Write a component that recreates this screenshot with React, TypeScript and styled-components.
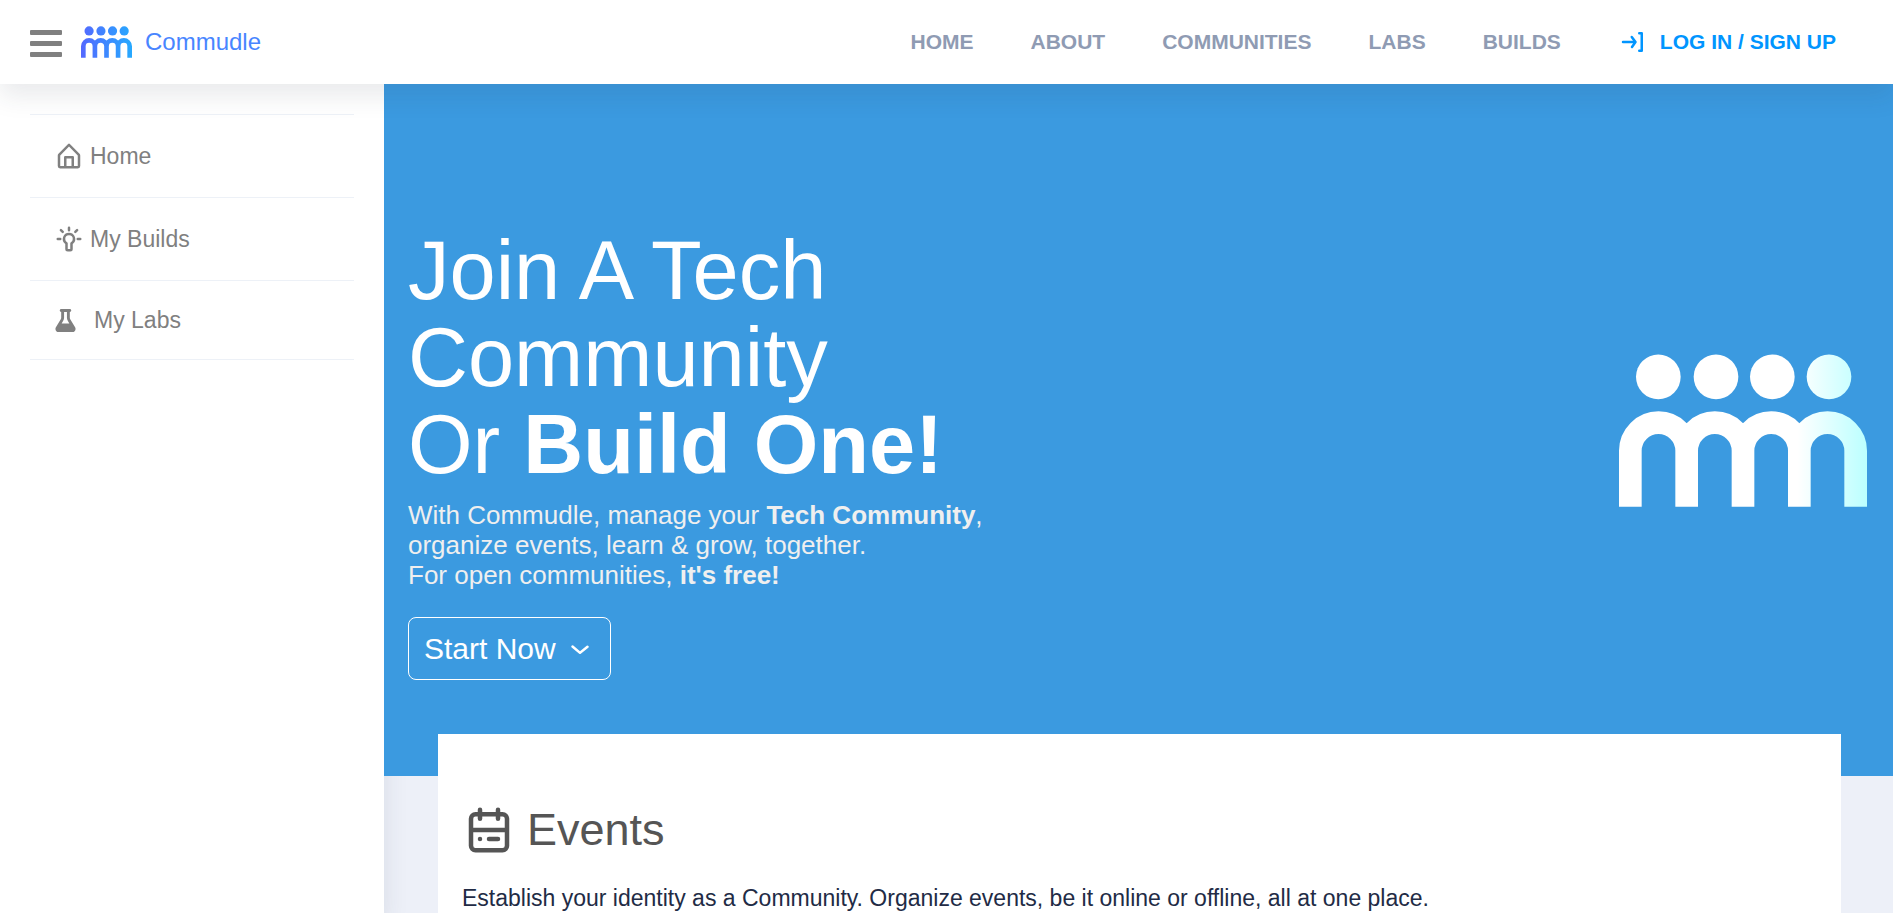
import React from "react";
import styled, { createGlobalStyle } from "styled-components";
import { FaFlask } from "react-icons/fa6";

const GlobalStyle = createGlobalStyle`
  *, *::before, *::after { box-sizing: border-box; }
  body {
    margin: 0;
    background: #edf0f8;
    color: #222b45;
    font-family: "Liberation Sans", Arial, Helvetica, sans-serif;
    font-size: 23px;
    line-height: 30px;
  }
`;

const Page = styled.div`
  display: flex;
  flex-direction: column;
  height: 100vh;
`;

const Header = styled.header`
  position: relative;
  z-index: 3;
  display: flex;
  align-items: center;
  justify-content: space-between;
  flex: none;
  height: 84px;
  padding: 0 57px 0 30px;
  background: #fff;
  box-shadow: 0 12px 24px 0 rgba(44, 51, 73, 0.1);
`;

const Brand = styled.div`
  display: flex;
  align-items: center;
`;

const MenuButton = styled.button`
  display: flex;
  flex-direction: column;
  gap: 6px;
  width: 32px;
  margin: 3px 19px 0 0;
  padding: 0;
  border: 0;
  background: none;
  cursor: pointer;
`;

const MenuBar = styled.span`
  height: 5px;
  border-radius: 1px;
  background: #808080;
`;

const BrandLink = styled.a`
  display: flex;
  align-items: center;
  gap: 13px;
  color: #4885ff;
  font-size: 24px;
  text-decoration: none;
`;

const Nav = styled.nav`
  display: flex;
  align-items: center;
  gap: 57px;
`;

const NavLink = styled.a<{ $accent?: boolean }>`
  display: flex;
  align-items: center;
  gap: 12px;
  color: ${(p) => (p.$accent ? "#0095ff" : "#8f9bb3")};
  font-size: 21px;
  font-weight: 700;
  text-decoration: none;
  text-transform: uppercase;
`;

const Body = styled.div`
  display: flex;
  flex: 1;
  min-height: 0;
`;

const Sidebar = styled.aside`
  flex: none;
  width: 384px;
  padding: 30px;
  background: #fff;
  box-shadow: 0 12px 24px 0 rgba(44, 51, 73, 0.1);
`;

const SideList = styled.ul`
  margin: 0;
  padding: 0;
  border-top: 1px solid #edf1f7;
  list-style: none;
`;

const SideItem = styled.li`
  border-bottom: 1px solid #edf1f7;
`;

const SideLink = styled.a<{ $compact?: boolean }>`
  display: flex;
  align-items: center;
  gap: ${(p) => (p.$compact ? 17 : 6)}px;
  height: ${(p) => (p.$compact ? 78 : 82)}px;
  padding: 0 24px;
  color: #808080;
  text-decoration: none;
`;

const Main = styled.main`
  position: relative;
  flex: 1;
  min-width: 0;
  overflow-y: auto;
  scrollbar-width: none;
`;

const Hero = styled.section`
  position: relative;
  display: flex;
  align-items: center;
  justify-content: space-between;
  padding: 0 26px 0 24px;
  background: #3b9ae0;
`;

const HeroCopy = styled.div`
  padding: 143px 0 96px;
`;

const HeroTitle = styled.h1`
  margin: 0 0 12px;
  color: #fff;
  font-size: 83px;
  font-weight: 400;
  line-height: 87px;
`;

const HeroText = styled.p`
  margin: 0 0 27px;
  color: #efefef;
  font-size: 26px;
`;

const StartButton = styled.button`
  display: flex;
  align-items: center;
  gap: 9px;
  height: 63px;
  padding: 0 15px;
  border: 1px solid #fff;
  border-radius: 8px;
  background: none;
  color: #fff;
  font-family: inherit;
  font-size: 30px;
  cursor: pointer;
`;

const EventsCard = styled.section`
  position: relative;
  margin: -42px 52px 0 54px;
  padding: 69px 24px 48px;
  background: #fff;
`;

const CardHeading = styled.h2`
  display: flex;
  align-items: center;
  gap: 11px;
  margin: 0 0 26px;
  color: #555;
  font-size: 45px;
  font-weight: 400;
  line-height: 54px;
`;

const CardText = styled.p`
  margin: 0;
`;

const EVA = {
  home: "M20.42 10.18L12.71 2.3a1 1 0 0 0-1.42 0l-7.71 7.89A2 2 0 0 0 3 11.62V20a2 2 0 0 0 1.89 2h14.22A2 2 0 0 0 21 20v-8.38a2.07 2.07 0 0 0-.58-1.44zM10 20v-6h4v6zm9 0h-3v-7a1 1 0 0 0-1-1H9a1 1 0 0 0-1 1v7H5v-8.42l7-7.15 7 7.19z",
  bulb: "M12 7a5 5 0 0 0-3 9v4a2 2 0 0 0 2 2h2a2 2 0 0 0 2-2v-4a5 5 0 0 0-3-9zm1.5 7.59a1 1 0 0 0-.5.87V20h-2v-4.54a1 1 0 0 0-.5-.87A3 3 0 0 1 9 12a3 3 0 0 1 6 0 3 3 0 0 1-1.5 2.59zM12 6a1 1 0 0 0 1-1V3a1 1 0 0 0-2 0v2a1 1 0 0 0 1 1zm9 5h-2a1 1 0 0 0 0 2h2a1 1 0 0 0 0-2zM5 11H3a1 1 0 0 0 0 2h2a1 1 0 0 0 0-2zm2.66-5.42L6.22 4.19a1 1 0 0 0-1.39 1.44l1.44 1.39a1 1 0 0 0 .73.28 1 1 0 0 0 .69-.31 1 1 0 0 0-.03-1.41zm10.12-1.39l-1.44 1.39a1 1 0 0 0 0 1.42 1 1 0 0 0 .72.3 1 1 0 0 0 .69-.28l1.44-1.39a1 1 0 0 0-1.41-1.44z",
  login: "M19 4h-2a1 1 0 0 0 0 2h1v12h-1a1 1 0 0 0 0 2h2a1 1 0 0 0 1-1V5a1 1 0 0 0-1-1zM11.8 7.4a1 1 0 0 0-1.6 1.2L12 11H4a1 1 0 0 0 0 2h8.09l-1.72 2.44a1 1 0 0 0 .24 1.4 1 1 0 0 0 .58.18 1 1 0 0 0 .81-.42l2.82-4a1 1 0 0 0 0-1.18z",
  calendar:
    "M18 4h-1V3a1 1 0 0 0-2 0v1H9V3a1 1 0 0 0-2 0v1H6a3 3 0 0 0-3 3v12a3 3 0 0 0 3 3h12a3 3 0 0 0 3-3V7a3 3 0 0 0-3-3zM6 6h1v1a1 1 0 0 0 2 0V6h6v1a1 1 0 0 0 2 0V6h1a1 1 0 0 1 1 1v4H5V7a1 1 0 0 1 1-1zm12 14H6a1 1 0 0 1-1-1v-6h14v6a1 1 0 0 1-1 1zM8 15a1 1 0 1 0 0 2a1 1 0 0 0 0-2zM16 15h-4a1 1 0 0 0 0 2h4a1 1 0 0 0 0-2z",
  chevron:
    "M12 16a1 1 0 0 1-.64-.23l-6-5a1 1 0 1 1 1.28-1.54L12 13.71l5.36-4.32a1 1 0 0 1 1.41.15 1 1 0 0 1-.14 1.46l-6 4.83A1 1 0 0 1 12 16z",
};

function EvaIcon({ name, size = 30 }: { name: keyof typeof EVA; size?: number }) {
  return (
    <svg width={size} height={size} viewBox="0 0 24 24" fill="currentColor" aria-hidden="true">
      <path d={EVA[name]} />
    </svg>
  );
}

/* Four heads over four linked arches, filled with one horizontal gradient. */
function Logo({ id, width, height, stops }: {
  id: string;
  width: number;
  height: number;
  stops: [string, string][];
}) {
  const paint = `url(#${id})`;
  return (
    <svg width={width} height={height} viewBox="0 0 744 458" aria-hidden="true">
      <defs>
        <linearGradient id={id} gradientUnits="userSpaceOnUse" x1="0" y1="0" x2="744" y2="0">
          {stops.map(([offset, color]) => (
            <stop key={offset} offset={offset} stopColor={color} />
          ))}
        </linearGradient>
      </defs>
      <g fill={paint}>
        {[118, 291, 460, 630].map((cx) => (
          <circle key={cx} cx={cx} cy="68" r="67" />
        ))}
      </g>
      <path
        fill="none"
        stroke={paint}
        strokeWidth="68"
        d="M34 458V290a84.5 84.5 0 0 1 169 0V458M203 290a84.5 84.5 0 0 1 169 0V458M372 290a84.5 84.5 0 0 1 169 0V458M541 290a84.5 84.5 0 0 1 169 0V458"
      />
    </svg>
  );
}

export default function App() {
  return (
    <Page>
      <GlobalStyle />
      <Header>
        <Brand>
          <MenuButton aria-label="Toggle menu">
            <MenuBar />
            <MenuBar />
            <MenuBar />
          </MenuButton>
          <BrandLink href="#">
            <Logo id="brand" width={51} height={32} stops={[["0", "#5468ff"], ["1", "#26a9ff"]]} />
            Commudle
          </BrandLink>
        </Brand>
        <Nav>
          <NavLink href="#">Home</NavLink>
          <NavLink href="#">About</NavLink>
          <NavLink href="#">Communities</NavLink>
          <NavLink href="#">Labs</NavLink>
          <NavLink href="#">Builds</NavLink>
          <NavLink href="#" $accent>
            <EvaIcon name="login" />
            Log in / Sign up
          </NavLink>
        </Nav>
      </Header>
      <Body>
        <Sidebar>
          <SideList>
            <SideItem>
              <SideLink href="#"><EvaIcon name="home" />Home</SideLink>
            </SideItem>
            <SideItem>
              <SideLink href="#"><EvaIcon name="bulb" />My Builds</SideLink>
            </SideItem>
            <SideItem>
              <SideLink href="#" $compact><FaFlask width={20} size={23} />My Labs</SideLink>
            </SideItem>
          </SideList>
        </Sidebar>
        <Main>
          <Hero>
            <HeroCopy>
              <HeroTitle>
                Join A Tech<br />
                Community<br />
                Or <strong>Build One!</strong>
              </HeroTitle>
              <HeroText>
                With Commudle, manage your <strong>Tech Community</strong>,<br />
                organize events, learn &amp; grow, together.<br />
                For open communities, <strong>it's free!</strong>
              </HeroText>
              <StartButton>
                Start Now
                <EvaIcon name="chevron" />
              </StartButton>
            </HeroCopy>
            <Logo id="hero" width={248} height={153} stops={[["0.72", "#ffffff"], ["1", "#bbffff"]]} />
          </Hero>
          <EventsCard>
            <CardHeading>
              <EvaIcon name="calendar" size={54} />
              Events
            </CardHeading>
            <CardText>
              Establish your identity as a Community. Organize events, be it online or offline, all at one place.
            </CardText>
          </EventsCard>
        </Main>
      </Body>
    </Page>
  );
}
